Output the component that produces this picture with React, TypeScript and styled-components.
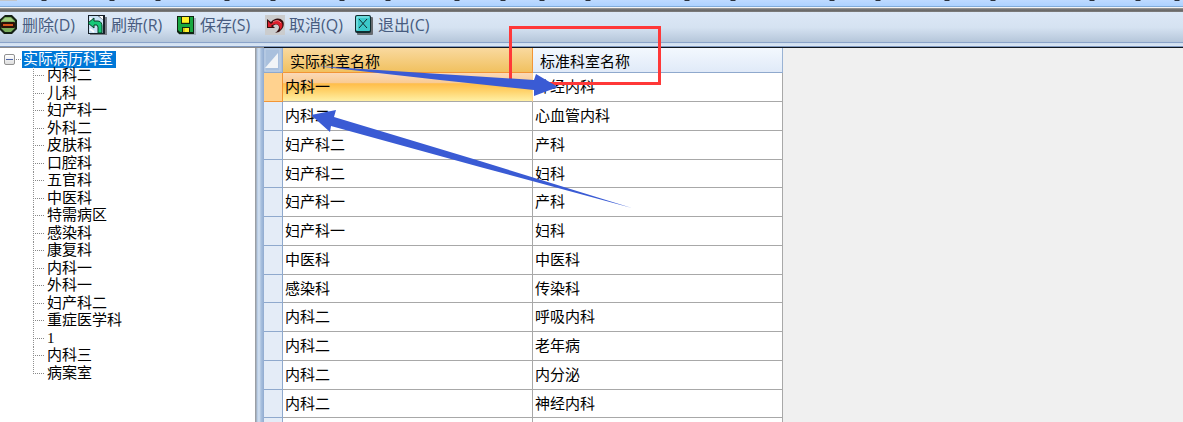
import React from "react";
import styled, { createGlobalStyle, css } from "styled-components";

const Global = createGlobalStyle`
  *, *::before, *::after { box-sizing: border-box; }
  body { margin: 0; background: #f0f0f0; }
  button { font: inherit; }
`;

const Page = styled.div`
  position: relative;
  display: flex;
  flex-direction: column;
  height: 100vh;
  overflow: hidden;
  font-family: "Noto Sans CJK SC", sans-serif;
  font-size: 15px;
  color: #000;
`;

const MenuEdge = styled.div`
  flex: none;
  height: 8px;
  overflow: hidden;
  background: linear-gradient(#bedaff, #add2ff 75%, #7faad8 75%, #86afdc 88%, #f4f4f4 88%);
  svg { display: block; }
`;

const MenuShadow = styled.div`
  flex: none;
  height: 4px;
  background: linear-gradient(#a8a5a2, #777 30%, #686868 70%, #858585);
`;

const Toolbar = styled.div`
  flex: none;
  display: flex;
  height: 31px;
  padding-bottom: 5px;
  margin-left: -2px;
  background: linear-gradient(#dce8f7, #d5e2f1 50%, #b5c6da 97%, #8aa3c9 97%);
`;

const ToolButton = styled.button`
  display: flex;
  flex: none;
  align-items: center;
  gap: 4px;
  width: 89px;
  padding: 0;
  border: 0;
  background: none;
  color: #485c80;
  font-family: "Open Sans", "Noto Sans CJK SC", sans-serif;
  font-size: 16px;
  line-height: 20px;
  white-space: nowrap;
  svg { flex: none; }
`;

const ToolbarEdge = styled.div`
  flex: none;
  height: 4px;
  background: linear-gradient(#cfdeef, #d9e6f5 70%, #7f98bf 75%);
`;

const Workspace = styled.div`
  flex: 1;
  display: flex;
  min-height: 0;
`;

const TreePane = styled.nav`
  flex: none;
  width: 255px;
  padding: 3px 0 0 4px;
  border-top: 1px solid #8c8c8c;
  background: #fff;
  font-family: "Liberation Serif", "Noto Sans CJK SC", serif;
`;

const TreeRoot = styled.div`
  display: flex;
  align-items: center;
  height: 16px;
`;

const Expander = styled.button`
  display: flex;
  align-items: center;
  justify-content: center;
  width: 11px;
  height: 11px;
  padding: 0;
  border: 1px solid #919191;
  border-radius: 2px;
  background: linear-gradient(#fff, #dedede);
  &::before {
    content: "";
    width: 7px;
    height: 1px;
    background: #4b63a7;
  }
`;

const Stub = styled.span`
  width: 5px;
  margin: 0 1px;
  border-top: 1px dotted #888;
`;

const RootLabel = styled.a`
  width: 94px;
  height: 17px;
  padding: 0 1px;
  background: #0078d7;
  color: #fff;
  line-height: 16px;
  text-decoration: none;
`;

const Branch = styled.ul`
  display: flex;
  flex-direction: column;
  height: 315px;
  margin: 0 0 0 29px;
  padding: 0;
  list-style: none;
`;

const Leaf = styled.li`
  flex: 1;
  display: flex;
  align-items: center;
  gap: 3px;
  min-height: 0;
  background: repeating-linear-gradient(#909090 0 1px, #fff 1px 2px) left top / 1px 100% no-repeat;
  &:last-child { background-size: 1px 50%; }
  &::before {
    content: "";
    width: 11px;
    border-top: 1px dotted #888;
  }
  a {
    color: #000;
    line-height: 17px;
    text-decoration: none;
  }
`;

const Splitter = styled.div`
  flex: none;
  width: 9px;
  border-top: 1px solid #8c8c8c;
  background: linear-gradient(90deg, #9b9fa5 0 1px, #b1c7e2 2px, #d5e2f1 4px, #a9c1df 6px, #91abd0);
`;

const GridPane = styled.main`
  flex: 1;
  min-width: 0;
  overflow: hidden;
  border-top: 1px solid #111820;
  background: #f0f0f0;
`;

const Grid = styled.table`
  width: 519px;
  table-layout: fixed;
  border-collapse: separate;
  border-spacing: 0;
  background: #fff;
`;

const SelectorCol = styled.col`
  width: 19px;
`;

const Corner = styled.th`
  height: 25px;
  padding: 0;
  border-right: 1px solid #93abcd;
  border-bottom: 1px solid #8fa9cd;
  background: #a9c0dd;
  svg { display: block; }
`;

const HeadCell = styled.th<{ $active?: boolean }>`
  height: 25px;
  padding: 1px 7px 0;
  border-right: 1px solid #9ab3d4;
  border-bottom: 1px solid #8fa9cd;
  background: linear-gradient(#f3f8fe, #e0eaf8);
  font-weight: 400;
  line-height: 20px;
  text-align: left;
  ${(p) =>
    p.$active &&
    css`
      border-color: #f29536;
      background: linear-gradient(#f9d99f, #f1c15f);
    `}
`;

const Row = styled.tr`
  height: 29px;
  &:nth-child(4n) { height: 28px; }
`;

const Selector = styled.th<{ $active?: boolean }>`
  padding: 0;
  border-right: 1px solid ${(p) => (p.$active ? "#f29536" : "#8fa9cd")};
  border-bottom: 1px solid ${(p) => (p.$active ? "#f29536" : "#8fa9cd")};
  background: ${(p) => (p.$active ? "#ffd28f" : "#e4ecf7")};
`;

const Cell = styled.td<{ $active?: boolean }>`
  padding: 0 2px 2px;
  border-right: 1px solid #a8a8a8;
  border-bottom: 1px solid #a8a8a8;
  line-height: 20px;
  white-space: nowrap;
  ${(p) =>
    p.$active &&
    css`
      border-right-color: #ffd28f;
      background: linear-gradient(#fbd9b8, #f9cb93 36%, #ffbd4a 38%, #ffd36c 65%, #fff0a5);
    `}
`;

const Annotations = styled.svg`
  position: absolute;
  top: 0;
  left: 0;
  pointer-events: none;
`;

const RemoveIcon = () => (
  <svg width="20" height="20" viewBox="0 0 20 20" aria-hidden="true">
    <path d="M7 0h7l5 5v9l-5 5H6l-5-5V5z" fill="#142014" />
    <path d="M7 2h6l4 4v7l-4 4H7l-4-4V6z" fill="#79ad5c" />
    <path d="M7 3h6l3 3H4z" fill="#a3cc83" />
    <rect x="3" y="7" width="14" height="6" rx="1" fill="#291209" />
    <rect x="5" y="9" width="10" height="2" fill="#d4541a" />
  </svg>
);

const RefreshIcon = () => (
  <svg width="20" height="20" viewBox="0 0 20 20" aria-hidden="true">
    <path d="M3 2h17v18H3z" fill="#777d86" />
    <path d="M1 0h17v19H1z" fill="#172029" />
    <path d="M2 1h9l5 4v13H2z" fill="#c9e1f5" />
    <path d="M12 1h4v4z" fill="#fff" />
    <path d="M3 3l3 3m-3 8l4 3" stroke="#fff" strokeWidth="2" />
    <path d="M1 8l6-5v3h4c3 0 4 3 4 5v7h-4v-6l-1-2H7v3z" fill="#16c878" stroke="#063f24" />
  </svg>
);

const SaveIcon = () => (
  <svg width="20" height="20" viewBox="0 0 20 20" aria-hidden="true">
    <path d="M3 3h17v17H3z" fill="#929ba8" opacity=".7" />
    <path d="M1 1h17v18H3l-2-2z" fill="#102411" />
    <path d="M2 2h15v15H4l-2-2z" fill="#18a842" />
    <path d="M5 1h9v8H5zM6 12h8v6H6z" fill="#14250f" />
    <path d="M6 2h7v6H6zM7 13h6v4H7z" fill="#fff12b" />
    <path d="M6 7h7v1H6zM7 13h2v4H7z" fill="#d3c91c" />
  </svg>
);

const UndoIcon = () => (
  <svg width="20" height="20" viewBox="0 0 20 20" aria-hidden="true">
    <path d="M0 0h20v20H0z" fill="#cbcccd" />
    <path d="M2 4l4 3c3-4 9-5 12-1 2 4 0 8-4 11l-4 1c4-3 5-6 3-8-2-1-4 0-5 1l2 2H2z" fill="#351011" />
    <path d="M3 6l3 3c4-4 8-5 11-1 1 3 0 5-2 7 0-4-2-6-4-6-2 0-4 1-5 2l1 1H3z" fill="#dc1e2c" />
    <path d="M8 7c3-2 6-2 8 1" fill="none" stroke="#ff858a" />
  </svg>
);

const ExitIcon = () => (
  <svg width="20" height="20" viewBox="0 0 20 20" aria-hidden="true">
    <rect x="3" y="2" width="16" height="18" rx="1" fill="#686b70" />
    <rect x="1" y="0" width="16" height="18" rx="2" fill="#102c30" />
    <rect x="2" y="1" width="14" height="15" rx="1" fill="#3cc8ca" />
    <path d="M3 15V2h12" fill="none" stroke="#9beced" />
    <path d="M5 4l8 9m0-9l-8 9" stroke="#102c30" />
  </svg>
);

const TOOLS = [
  { label: "删除(D)", Icon: RemoveIcon },
  { label: "刷新(R)", Icon: RefreshIcon },
  { label: "保存(S)", Icon: SaveIcon },
  { label: "取消(Q)", Icon: UndoIcon },
  { label: "退出(C)", Icon: ExitIcon },
];

const DEPARTMENTS = [
  "内科二", "儿科", "妇产科一", "外科二", "皮肤科", "口腔科", "五官科", "中医科", "特需病区",
  "感染科", "康复科", "内科一", "外科一", "妇产科二", "重症医学科", "1", "内科三", "病案室",
];

const MAPPINGS = [
  ["内科一", "神经内科"],
  ["内科二", "心血管内科"],
  ["妇产科二", "产科"],
  ["妇产科二", "妇科"],
  ["妇产科一", "产科"],
  ["妇产科一", "妇科"],
  ["中医科", "中医科"],
  ["感染科", "传染科"],
  ["内科二", "呼吸内科"],
  ["内科二", "老年病"],
  ["内科二", "内分泌"],
  ["内科二", "神经内科"],
  ["", ""],
];

const MENU_MARKS = [
  44, 112, 158, 227, 273, 342, 388, 457, 503, 542, 588, 687, 733, 832, 878, 947, 993, 1092, 1138, 1177,
];

export default function App() {
  return (
    <Page>
      <Global />
      <MenuEdge>
        <svg width="1183" height="6" aria-hidden="true">
          <path d="M0 0h17v1H0z" fill="#c3c6ca" />
          {MENU_MARKS.map((x) => (
            <path key={x} d={`M${x - 3} 0h6l-1 1h-4z`} fill="#28303c" />
          ))}
        </svg>
      </MenuEdge>
      <MenuShadow />
      <Toolbar role="toolbar">
        {TOOLS.map(({ label, Icon }) => (
          <ToolButton key={label} type="button">
            <Icon />
            {label}
          </ToolButton>
        ))}
      </Toolbar>
      <ToolbarEdge />
      <Workspace>
        <TreePane>
          <TreeRoot>
            <Expander type="button" aria-expanded="true" />
            <Stub />
            <RootLabel href="#root">实际病历科室</RootLabel>
          </TreeRoot>
          <Branch>
            {DEPARTMENTS.map((name) => (
              <Leaf key={name}>
                <a href="#department">{name}</a>
              </Leaf>
            ))}
          </Branch>
        </TreePane>
        <Splitter />
        <GridPane>
          <Grid>
            <colgroup>
              <SelectorCol />
              <col />
              <col />
            </colgroup>
            <thead>
              <tr>
                <Corner>
                  <svg width="18" height="24" aria-hidden="true">
                    <path d="M1 1h15v22H1z" fill="none" stroke="#bfd0e6" />
                    <path d="M14 5v15H1z" fill="#f1f4f7" />
                  </svg>
                </Corner>
                <HeadCell $active>实际科室名称</HeadCell>
                <HeadCell>标准科室名称</HeadCell>
              </tr>
            </thead>
            <tbody>
              {MAPPINGS.map(([actual, standard], i) => (
                <Row key={i}>
                  <Selector scope="row" $active={i === 0} />
                  <Cell $active={i === 0}>{actual}</Cell>
                  <Cell>{standard}</Cell>
                </Row>
              ))}
            </tbody>
          </Grid>
        </GridPane>
      </Workspace>
      <Annotations width="1183" height="422" aria-hidden="true">
        <rect x="510.5" y="27.5" width="149" height="56" fill="none" stroke="#ff3838" strokeWidth="3" />
        <path d="M316 66L440 74L534 80L536 74L558 87L534 96V90L440 80Z" fill="#3a5bd4" />
        <path d="M311 115L336 110L334 117L480 161L632 208L480 167L331 126L330 132Z" fill="#3a5bd4" />
      </Annotations>
    </Page>
  );
}
